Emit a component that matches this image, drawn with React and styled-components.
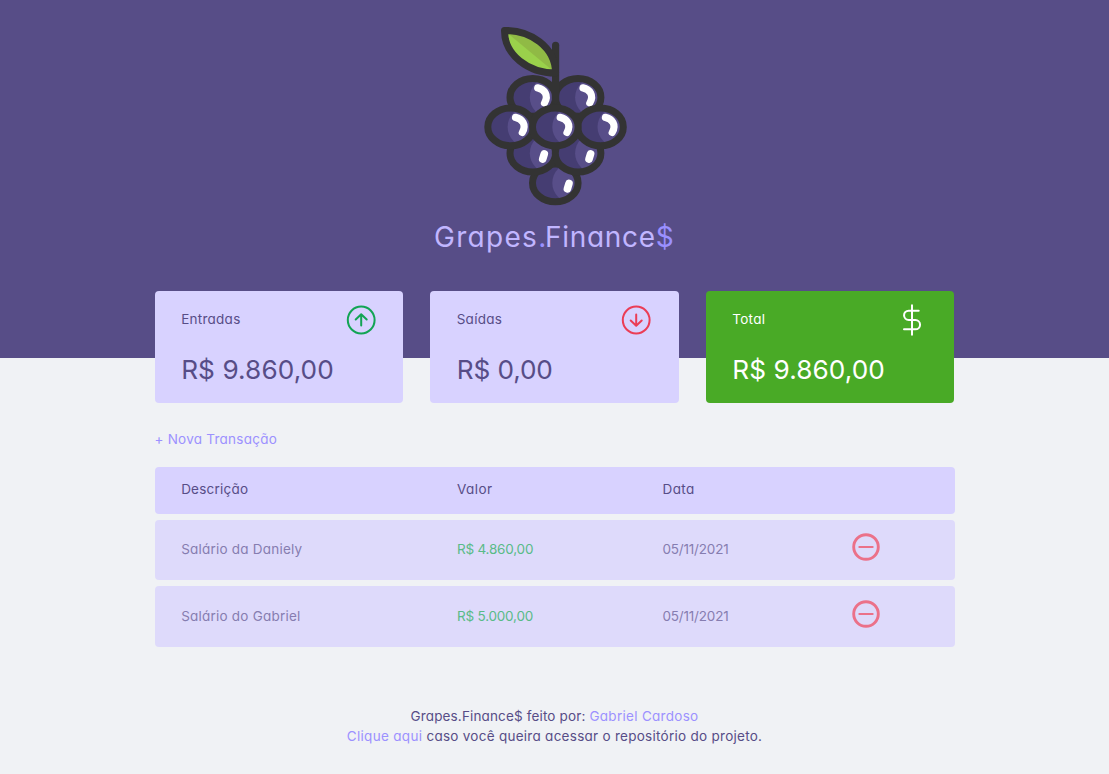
import React from "react";
import styled, { createGlobalStyle } from "styled-components";

const GlobalStyle = createGlobalStyle`
  * { box-sizing: border-box; margin: 0; padding: 0; }
  body {
    background: #f0f2f5;
    color: #574d87;
    font-family: Inter, "Open Sans", sans-serif;
    font-feature-settings: "cv11";
    font-size: 13.5px;
    line-height: 20px;
  }
`;

const Header = styled.header`
  display: flex;
  flex-direction: column;
  align-items: center;
  height: 358px;
  padding-top: 27px;
  background: #574d87;
`;

const Logo = styled.svg`
  display: block;
  width: 145px;
  height: 179px;
`;

const Brand = styled.h1`
  display: flex;
  width: 241px;
  margin-top: 13px;
  color: #c1b6ff;
  font-size: 28px;
  font-weight: 400;
  line-height: 36px;
`;

const BrandWord = styled.span`
  letter-spacing: ${(p) => p.$spacing}px;
`;

const BrandAccent = styled(BrandWord)`
  color: #9a90ff;
`;

const Main = styled.main`
  width: 800px;
  margin: -67px auto 0;
`;

const Balance = styled.section`
  display: grid;
  grid-template-columns: repeat(3, 1fr);
  gap: 26.8px;
  padding-right: 0.2px;
`;

const Card = styled.article`
  height: 112px;
  padding: 13px 26.67px 0;
  border-radius: 4px;
  background: ${(p) => (p.$total ? "#49aa26" : "#d8d2ff")};
  color: ${(p) => (p.$total ? "#fff" : "inherit")};
`;

const CardTop = styled.h3`
  display: flex;
  justify-content: space-between;
  font-size: inherit;
  font-weight: 400;
  line-height: 30px;
`;

const CardIcon = styled.svg`
  width: 32px;
  height: 32px;
  fill: none;
  stroke: ${(p) => p.$color};
  stroke-width: 2;
  stroke-linecap: round;
  stroke-linejoin: round;
`;

const Amount = styled.p`
  margin-top: 14px;
  font-size: 26.2px;
  font-weight: 400;
  line-height: 40px;
  letter-spacing: ${(p) => p.$spacing}px;
`;

const Text = styled.span`
  white-space: nowrap;
  letter-spacing: ${(p) => p.$spacing ?? 0.22}px;
`;

const Link = styled.a`
  color: #9c91ff;
  letter-spacing: ${(p) => p.$spacing ?? 0.24}px;
  text-decoration: none;
`;

const NewTransaction = styled(Link)`
  display: block;
  width: max-content;
  margin: 26px 0 18px;
`;

const Table = styled.section`
  display: grid;
  gap: 6px;
`;

const Row = styled.div`
  display: grid;
  grid-template-columns: 275.8px 205.5px 189.5px 1fr;
  align-items: center;
  height: ${(p) => p.$height}px;
  padding: 0 26.67px ${(p) => p.$lift}px;
  border-radius: 4px;
  background: ${(p) => (p.$head ? "#d8d2ff" : "#dedafb")};
  color: ${(p) => (p.$head ? "#574d87" : "#867db0")};
`;

const Income = styled(Text)`
  color: #59bb88;
`;

const RemoveIcon = styled.svg`
  width: 28px;
  height: 28px;
  margin-top: -5px;
  fill: none;
  stroke: #eb7189;
  stroke-linecap: round;
`;

const Footer = styled.footer`
  margin-top: 59px;
  text-align: center;
`;

function Berry({ x, y, pill }) {
  const id = `berry-${Math.round(x)}-${Math.round(y)}`;
  return (
    <g transform={`translate(${x} ${y})`}>
      <clipPath id={id}>
        <ellipse rx="22.8" ry="18.9" />
      </clipPath>
      <ellipse rx="22.8" ry="18.9" fill="#453d72" />
      <ellipse cx="17" rx="20" ry="20" fill="#584e89" clipPath={`url(#${id})`} />
      <ellipse rx="22.8" ry="18.9" fill="none" stroke="#333" strokeWidth="7" />
      <path
        d={
          pill
            ? `M${pill + 0.9} .6L${pill - 0.7} 6`
            : "M4.9 -9.5C11.5 -8.2 16.3 -2 11.7 5.6"
        }
        fill="none"
        stroke="#fff"
        strokeWidth={pill ? 7.6 : 7.2}
        strokeLinecap="round"
      />
    </g>
  );
}

function Grapes() {
  return (
    <Logo viewBox="481.7 27 145 179">
      <Berry x={555} y={182.9} pill={12.8} />
      <Berry x={532.5} y={153.2} pill={10.6} />
      <Berry x={577.8} y={153.2} pill={11.6} />
      <Berry x={532.5} y={97.4} />
      <Berry x={577.8} y={97.4} />
      <path d="M555.3 45.3V100" stroke="#333" strokeWidth="7.2" strokeLinecap="round" />
      <Berry x={510.3} y={126.9} />
      <Berry x={600.2} y={126.9} />
      <Berry x={555} y={126.9} />
      <path d="M504.2 30.5C530 30 555 47 555.3 73C528 73 504 55 504.2 30.5Z" fill="#9ad14b" />
      <path d="M504.2 30.5C530 30 555 47 555.3 73Z" fill="#90ba45" />
      <path
        d="M504.2 30.5C530 30 555 47 555.3 73C528 73 504 55 504.2 30.5Z"
        fill="none"
        stroke="#333"
        strokeWidth="7"
        strokeLinejoin="round"
      />
    </Logo>
  );
}

const ArrowCircle = ({ down, color }) => (
  <CardIcon viewBox="0.3 0 32 32" $color={color}>
    <circle cx="16.5" cy="16" r="13.4" />
    <path d={down ? "M16.5 10.5V21.5M11 16.5L16.5 21.7L22 16.5" : "M16.5 21.5V10.5M11 15.5L16.5 10.3L22 15.5"} />
  </CardIcon>
);

const Dollar = () => (
  <CardIcon viewBox="0.5 0 32 32" $color="#fff">
    <path d="M16.5 1.3V30.7M23.2 6.7H13.2a4.65 4.65 0 0 0 0 9.3H19.9a4.65 4.65 0 0 1 0 9.3H8.5" />
  </CardIcon>
);

const Minus = () => (
  <RemoveIcon viewBox="0 0 28 28">
    <circle cx="14" cy="14" r="12.3" strokeWidth="2.9" />
    <path d="M7.3 14H20.7" strokeWidth="2" />
  </RemoveIcon>
);

const transactions = [
  { name: "Salário da Daniely", value: "R$ 4.860,00", date: "05/11/2021", height: 60, lift: 2 },
  { name: "Salário do Gabriel", value: "R$ 5.000,00", date: "05/11/2021", height: 61, lift: 1 },
];

export default function App() {
  return (
    <>
      <GlobalStyle />
      <Header>
        <Grapes />
        <Brand>
          <BrandWord $spacing={1.3}>Grapes</BrandWord>
          <BrandAccent $spacing={-1.2}>.</BrandAccent>
          <BrandWord $spacing={0.7}>Finance</BrandWord>
          <BrandAccent $spacing={0}>$</BrandAccent>
        </Brand>
      </Header>
      <Main>
        <Balance>
          <Card>
            <CardTop>
              <Text $spacing={0.26}>Entradas</Text>
              <ArrowCircle color="#12a454" />
            </CardTop>
            <Amount $spacing={0.08}>R$ 9.860,00</Amount>
          </Card>
          <Card>
            <CardTop>
              <Text $spacing={0.26}>Saídas</Text>
              <ArrowCircle down color="#eb3d56" />
            </CardTop>
            <Amount $spacing={-0.1}>R$ 0,00</Amount>
          </Card>
          <Card $total>
            <CardTop>
              <Text $spacing={0.3}>Total</Text>
              <Dollar />
            </CardTop>
            <Amount $spacing={0.08}>R$ 9.860,00</Amount>
          </Card>
        </Balance>
        <NewTransaction>+ Nova Transação</NewTransaction>
        <Table>
          <Row $head $height={47} $lift={3}>
            <Text>Descrição</Text>
            <Text $spacing={0.45}>Valor</Text>
            <Text $spacing={0.45}>Data</Text>
          </Row>
          {transactions.map((t) => (
            <Row key={t.name} $height={t.height} $lift={t.lift}>
              <Text>{t.name}</Text>
              <Income $spacing={-0.2}>{t.value}</Income>
              <Text $spacing={-0.18}>{t.date}</Text>
              <Minus />
            </Row>
          ))}
        </Table>
      </Main>
      <Footer>
        <p>
          <Text $spacing={0.15}>Grapes.Finance$ feito por: </Text>
          <Link $spacing={0.29}>Gabriel Cardoso</Link>
        </p>
        <p>
          <Link $spacing={0.32}>Clique aqui</Link>
          <Text $spacing={0.27}> caso você queira acessar o repositório do projeto.</Text>
        </p>
      </Footer>
    </>
  );
}
